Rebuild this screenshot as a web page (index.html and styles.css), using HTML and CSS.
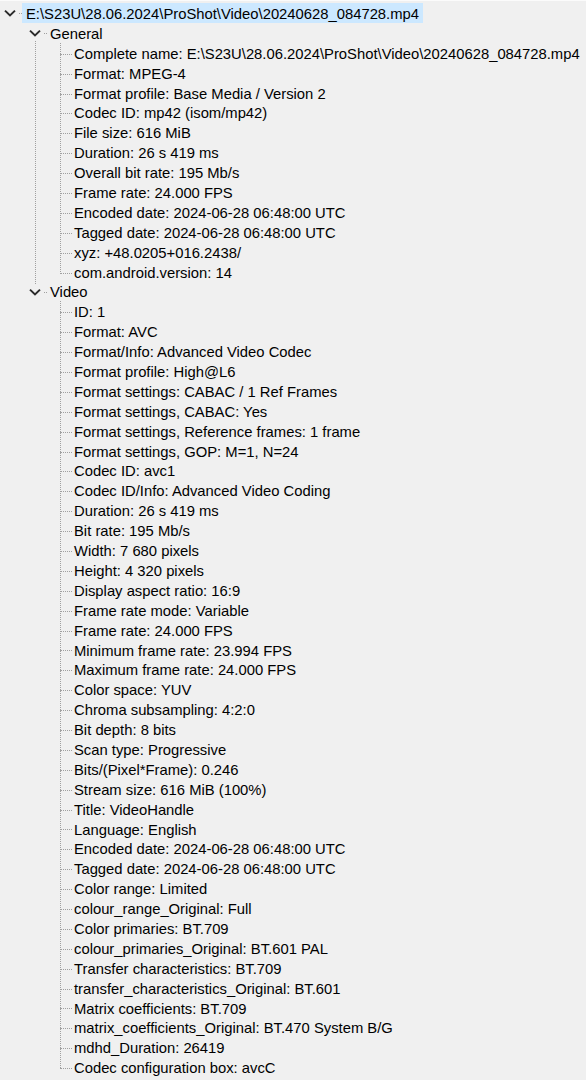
FILE: index.html
```html
<!DOCTYPE html>
<html>
<head>
<meta charset="utf-8">
<link rel="stylesheet" href="styles.css">
</head>
<body>
<div class="tree">
  <div class="node root">
    <div class="row">
      <span class="toggle"><svg viewBox="0 0 16 16" width="16" height="16"><path d="M3 5.6 L8 10.4 L13 5.6" fill="none" stroke="#2b2b2b" stroke-width="2"/></svg></span>
      <span class="label selected">E:\S23U\28.06.2024\ProShot\Video\20240628_084728.mp4</span>
    </div>
    <div class="node branch">
      <div class="row">
        <span class="toggle"><svg viewBox="0 0 16 16" width="16" height="16"><path d="M3 5.6 L8 10.4 L13 5.6" fill="none" stroke="#2b2b2b" stroke-width="2"/></svg></span>
        <span class="label">General</span>
      </div>
      <ul class="leaves">
        <li>Complete name: E:\S23U\28.06.2024\ProShot\Video\20240628_084728.mp4</li>
        <li>Format: MPEG-4</li>
        <li>Format profile: Base Media / Version 2</li>
        <li>Codec ID: mp42 (isom/mp42)</li>
        <li>File size: 616 MiB</li>
        <li>Duration: 26 s 419 ms</li>
        <li>Overall bit rate: 195 Mb/s</li>
        <li>Frame rate: 24.000 FPS</li>
        <li>Encoded date: 2024-06-28 06:48:00 UTC</li>
        <li>Tagged date: 2024-06-28 06:48:00 UTC</li>
        <li>xyz: +48.0205+016.2438/</li>
        <li>com.android.version: 14</li>
      </ul>
    </div>
    <div class="node branch last">
      <div class="row">
        <span class="toggle"><svg viewBox="0 0 16 16" width="16" height="16"><path d="M3 5.6 L8 10.4 L13 5.6" fill="none" stroke="#2b2b2b" stroke-width="2"/></svg></span>
        <span class="label">Video</span>
      </div>
      <ul class="leaves">
        <li>ID: 1</li>
        <li>Format: AVC</li>
        <li>Format/Info: Advanced Video Codec</li>
        <li>Format profile: High@L6</li>
        <li>Format settings: CABAC / 1 Ref Frames</li>
        <li>Format settings, CABAC: Yes</li>
        <li>Format settings, Reference frames: 1 frame</li>
        <li>Format settings, GOP: M=1, N=24</li>
        <li>Codec ID: avc1</li>
        <li>Codec ID/Info: Advanced Video Coding</li>
        <li>Duration: 26 s 419 ms</li>
        <li>Bit rate: 195 Mb/s</li>
        <li>Width: 7 680 pixels</li>
        <li>Height: 4 320 pixels</li>
        <li>Display aspect ratio: 16:9</li>
        <li>Frame rate mode: Variable</li>
        <li>Frame rate: 24.000 FPS</li>
        <li>Minimum frame rate: 23.994 FPS</li>
        <li>Maximum frame rate: 24.000 FPS</li>
        <li>Color space: YUV</li>
        <li>Chroma subsampling: 4:2:0</li>
        <li>Bit depth: 8 bits</li>
        <li>Scan type: Progressive</li>
        <li>Bits/(Pixel*Frame): 0.246</li>
        <li>Stream size: 616 MiB (100%)</li>
        <li>Title: VideoHandle</li>
        <li>Language: English</li>
        <li>Encoded date: 2024-06-28 06:48:00 UTC</li>
        <li>Tagged date: 2024-06-28 06:48:00 UTC</li>
        <li>Color range: Limited</li>
        <li>colour_range_Original: Full</li>
        <li>Color primaries: BT.709</li>
        <li>colour_primaries_Original: BT.601 PAL</li>
        <li>Transfer characteristics: BT.709</li>
        <li>transfer_characteristics_Original: BT.601</li>
        <li>Matrix coefficients: BT.709</li>
        <li>matrix_coefficients_Original: BT.470 System B/G</li>
        <li>mdhd_Duration: 26419</li>
        <li>Codec configuration box: avcC</li>
      </ul>
    </div>
  </div>
</div>
</body>
</html>
```

FILE: styles.css
```css
html, body {
  margin: 0;
  background: #f0f0f0;
}
body {
  font-family: "Liberation Sans", Arial, sans-serif;
  font-size: 14.8px;
  color: #000;
}
.tree {
  border-top: 1px solid #fbfbfb;
  padding-top: 2px;
}
.node {
  position: relative;
}
.row {
  display: flex;
  align-items: stretch;
  height: 19.9px;
}
.toggle {
  position: relative;
  flex: none;
  width: 22px;
  display: flex;
  align-items: center;
}
.toggle::before {
  content: "";
  position: absolute;
  left: 10px;
  right: 0;
  top: calc(50% + 0.5px);
  border-top: 1px dotted #a0a0a0;
}
.toggle svg {
  position: relative;
  z-index: 1;
  margin-left: 2px;
  margin-top: 1px;
  background: #f0f0f0;
  display: block;
}
.label {
  white-space: nowrap;
  height: 19.9px;
  line-height: 23.6px;
  padding: 0 2px;
}
.label.selected {
  background: #cce8ff;
  padding: 0 4px;
  height: 20px;
  line-height: 23.8px;
}
.branch > .row {
  padding-left: 22px;
}
.branch > .row .toggle {
  width: 25px;
}
.branch > .row .toggle::before {
  left: 13px;
}
.branch > .row .toggle svg {
  margin-left: 5px;
}
.branch > .row .label {
  padding-left: 3px;
}
.branch:not(.last)::before {
  content: "";
  position: absolute;
  left: 35px;
  top: 11px;
  bottom: -11px;
  border-left: 1px dotted #a0a0a0;
}
.branch.last::before {
  content: "";
  position: absolute;
  left: 35px;
  top: 0;
  height: 11px;
  border-left: 1px dotted #a0a0a0;
}
.leaves {
  position: relative;
  list-style: none;
  margin: 0;
  padding: 0 0 0 72px;
}
.leaves::before {
  content: "";
  position: absolute;
  left: 60px;
  top: 0;
  bottom: 9px;
  border-left: 1px dotted #a0a0a0;
}
.leaves li {
  position: relative;
  height: 19.9px;
  line-height: 23.6px;
  padding-left: 2px;
  white-space: nowrap;
}
.leaves li::before {
  content: "";
  position: absolute;
  left: -12px;
  width: 12px;
  top: calc(50% + 1px);
  border-top: 1px dotted #a0a0a0;
}
```
